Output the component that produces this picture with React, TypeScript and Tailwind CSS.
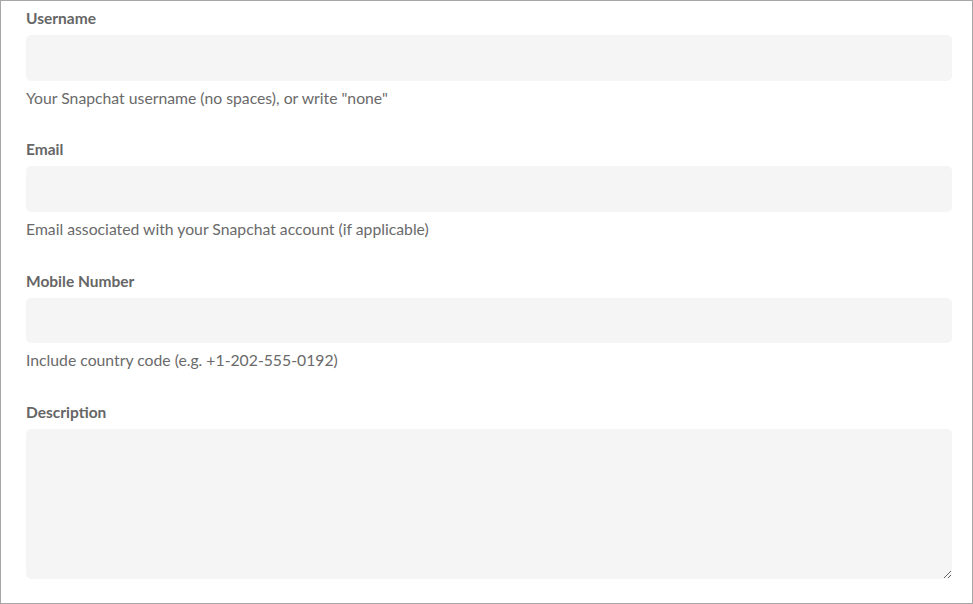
import React from "react";

const fields = [
  { label: "Username", help: 'Your Snapchat username (no spaces), or write "none"' },
  { label: "Email", help: "Email associated with your Snapchat account (if applicable)" },
  { label: "Mobile Number", help: "Include country code (e.g. +1-202-555-0192)" },
];

export default function App() {
  return (
    <div
      className="w-[973px] h-[604px] border border-[#a6a6a6] bg-white box-border pl-[25px] pr-[20px] pt-[7px] overflow-hidden"
      style={{ fontFamily: "Lato, 'Noto Sans', sans-serif" }}
    >
      {fields.map((f) => (
        <div key={f.label} className="mb-[31.83px]">
          <label className="block text-[15.5px] leading-[20px] font-bold text-[#666666]">{f.label}</label>
          <input className="block mt-[7px] w-[926px] h-[45.5px] rounded-[5px] bg-[#f5f5f5] outline-none" />
          <p className="mt-[7px] text-[15.75px] leading-[20px] text-[#6a6a6a]">{f.help}</p>
        </div>
      ))}
      <div>
        <label className="block text-[15.5px] leading-[20px] font-bold text-[#666666]">Description</label>
        <textarea className="block mt-[7px] w-[926px] h-[150px] rounded-[5px] bg-[#f5f5f5] outline-none" />
      </div>
    </div>
  );
}
